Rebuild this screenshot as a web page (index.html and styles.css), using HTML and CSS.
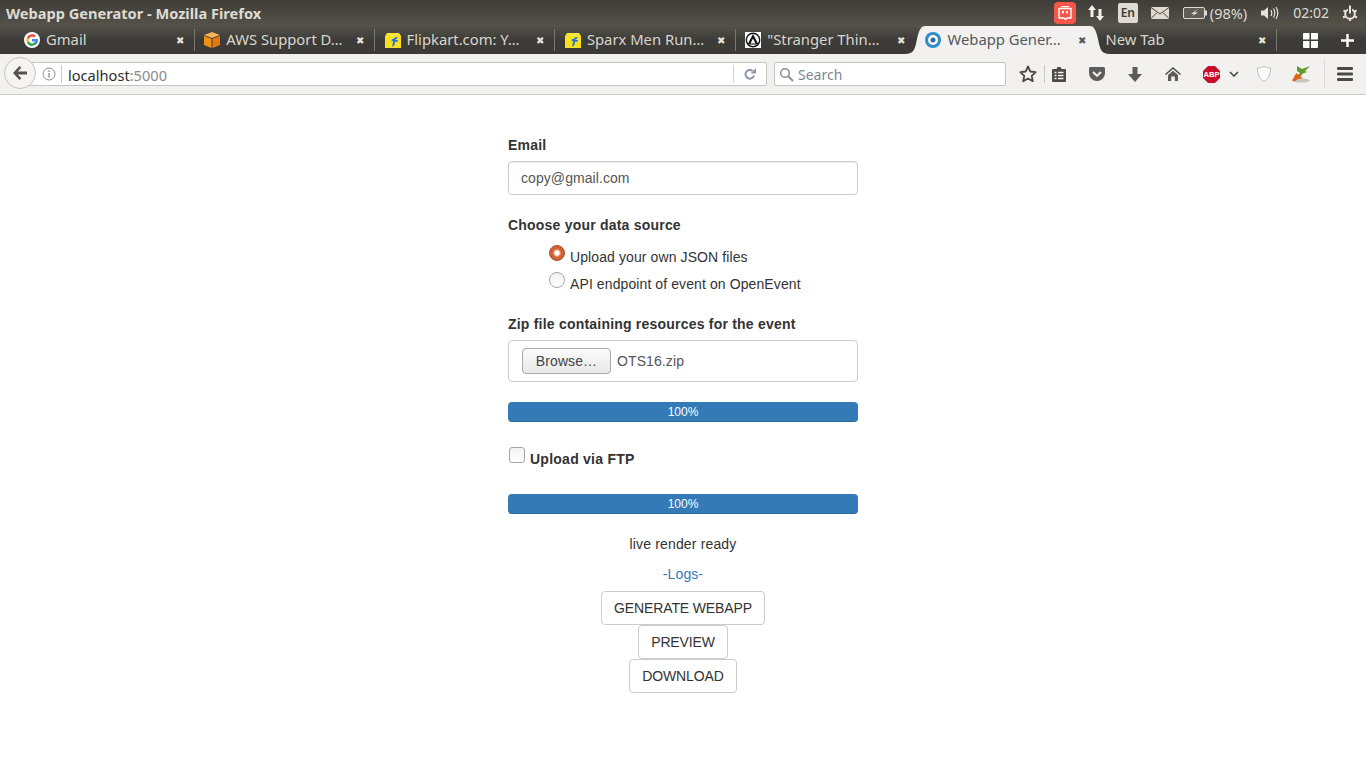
FILE: index.html
```html
<!DOCTYPE html>
<html lang="en">
<head>
<meta charset="utf-8">
<title>Webapp Generator</title>
<link rel="stylesheet" href="styles.css">
</head>
<body>
<header class="chrome">
  <div class="titlebar">
    <div class="wintitle">Webapp Generator - Mozilla Firefox</div>
    <div class="tray">
      <span class="tray-app"><svg width="22" height="22" viewBox="0 0 22 22"><rect width="22" height="22" rx="4" fill="#f4574a"/><path d="M5 6.500h12v9.500H13l-1.500 1.600L10 16H5z" fill="none" stroke="#fff" stroke-width="1.400" stroke-linejoin="round"/><rect x="8" y="9" width="1.800" height="2.400" fill="#fff"/><rect x="12.200" y="9" width="1.800" height="2.400" fill="#fff"/><rect x="7" y="4" width="8" height="1.200" fill="#fff"/></svg></span>
      <svg class="tray-net" width="18" height="18" viewBox="0 0 18 18"><path d="M5 1l4 5H6.500v7h-3V6H1zM13 17l4-5h-2.500V5h-3v7H9z" fill="#f2efe8"/></svg>
      <span class="tray-lang">En</span>
      <svg class="tray-mail" width="18" height="12" viewBox="0 0 18 12"><rect width="18" height="12" rx="1" fill="#dfdbd2"/><path d="M0 .5l9 6.500 9-6.500M0 11.500l6-6M18 11.500l-6-6" fill="none" stroke="#45433d" stroke-width="1"/></svg>
      <svg class="tray-bat" width="24" height="12" viewBox="0 0 24 12"><rect x=".5" y=".5" width="21" height="11" rx="1.500" fill="#5f5d56" stroke="#dfdbd2"/><rect x="22" y="3.500" width="2" height="5" fill="#dfdbd2"/><path d="M15 2L8 7h3.500L8 10l7-4.500h-3.500z" fill="#e8e5dd"/></svg>
      <span class="tray-pct">(98%)</span>
      <svg class="tray-vol" width="20" height="16" viewBox="0 0 20 16"><path d="M1 5.500h3L8 2v12l-4-3.500H1z" fill="#e6e2da"/><path d="M11 5q1.500 3 0 6M13.500 3.500q2.500 4.500 0 9M16 2q3.500 6 0 12" fill="none" stroke="#e6e2da" stroke-width="1.200"/></svg>
      <span class="tray-time">02:02</span>
      <svg class="tray-power" width="16" height="16" viewBox="0 0 16 16"><circle cx="8" cy="9" r="4.800" fill="none" stroke="#e6e2da" stroke-width="2"/><path d="M8 9V1" stroke="#45433d" stroke-width="4"/><path d="M8 8.500V.5" stroke="#e6e2da" stroke-width="2"/><path d="M1.500 5.500l2 1M14.500 5.500l-2 1M1 12.500l2.200-1M15 12.500l-2.200-1M8 16v-2" stroke="#e6e2da" stroke-width="2"/></svg>
    </div>
  </div>
  <div class="tabstrip">
    <div class="tab">
      <svg class="fav" width="16" height="16" viewBox="0 0 16 16"><circle cx="8" cy="8" r="8" fill="#fff"/><path d="M13.600 6.900H8v2.300h3.200c-.4 1.400-1.600 2.200-3.200 2.200a3.400 3.400 0 0 1-3.200-2.300L2.900 10.600A5.700 5.700 0 0 0 13.600 6.900z" fill="#34a853"/><path d="M4.800 9.100a3.400 3.400 0 0 1 0-2.200L2.900 5.400a5.700 5.700 0 0 0 0 5.200z" fill="#fbbc05"/><path d="M8 4.600c.9 0 1.600.3 2.200.8l1.600-1.600A5.700 5.700 0 0 0 2.900 5.400l1.900 1.500A3.400 3.400 0 0 1 8 4.600z" fill="#ea4335"/><path d="M13.600 6.900H8v2.300h3.200c-.2.700-.6 1.200-1.200 1.600l1.800 1.400c1.200-1.100 2-3 1.800-5.300z" fill="#4285f4"/></svg>
      <span class="tab-label">Gmail</span><span class="x">✖</span>
    </div>
    <div class="tab">
      <svg class="fav" width="16" height="16" viewBox="0 0 16 16"><path d="M8 0l8 3-8 3-8-3z" fill="#f7b259"/><path d="M0 4l7.500 2.800V16L0 13z" fill="#f29111"/><path d="M16 4L8.500 6.800V16l7.500-3z" fill="#e47911"/></svg>
      <span class="tab-label">AWS Support D…</span><span class="x">✖</span>
    </div>
    <div class="tab">
      <svg class="fav" width="16" height="16" viewBox="0 0 16 16"><path d="M2 1h12l2 3v12H0V4z" fill="#f9e21d"/><path d="M4 1q4 5 8 0" fill="none" stroke="#fff6a8" stroke-width=".8"/><path d="M7 15l1.200-6H6.500L7 7h1.800c.3-1.600 1.500-2 3.700-1.700l-.4 1.700H10.800l-.2 1H13l-.5 1.700h-2.400L9.400 13z" fill="#2a6fdb"/></svg>
      <span class="tab-label">Flipkart.com: Y…</span><span class="x">✖</span>
    </div>
    <div class="tab">
      <svg class="fav" width="16" height="16" viewBox="0 0 16 16"><path d="M2 1h12l2 3v12H0V4z" fill="#f9e21d"/><path d="M4 1q4 5 8 0" fill="none" stroke="#fff6a8" stroke-width=".8"/><path d="M7 15l1.200-6H6.500L7 7h1.800c.3-1.600 1.500-2 3.700-1.700l-.4 1.700H10.800l-.2 1H13l-.5 1.700h-2.400L9.400 13z" fill="#2a6fdb"/></svg>
      <span class="tab-label">Sparx Men Run…</span><span class="x">✖</span>
    </div>
    <div class="tab">
      <svg class="fav" width="16" height="16" viewBox="0 0 16 16"><rect width="16" height="16" fill="#fff"/><circle cx="8" cy="8" r="7.400" fill="#111"/><circle cx="8" cy="8" r="6" fill="#fff"/><path d="M8 2L2.500 12.500h11z" fill="#111"/><path d="M8 6.500L5.500 11.500h5z" fill="#fff"/></svg>
      <span class="tab-label">"Stranger Thin…</span><span class="x">✖</span>
    </div>
    <div class="tab tab-active">
      <svg class="tab-curve curve-left" width="20" height="28" viewBox="0 0 20 28"><path d="M0 28c9 0 10-5 12-15C14 4 16 0 20 0v28z" fill="#f2f1ef"/></svg>
      <svg class="fav" width="16" height="16" viewBox="0 0 16 16"><circle cx="8" cy="8" r="8" fill="#2f8ccb"/><circle cx="8" cy="8" r="5" fill="#fff"/><circle cx="8" cy="8" r="2.500" fill="#2a6ea8"/></svg>
      <span class="tab-label">Webapp Gener…</span><span class="x">✖</span>
      <svg class="tab-curve curve-right" width="20" height="28" viewBox="0 0 20 28"><path d="M20 28c-9 0-10-5-12-15C6 4 4 0 0 0v28z" fill="#f2f1ef"/></svg>
    </div>
    <div class="tab tab-new">
      <span class="tab-label">New Tab</span><span class="x">✖</span>
    </div>
    <svg class="tiles" width="15" height="15" viewBox="0 0 15 15"><path d="M0 1a1 1 0 0 1 1-1h5.500v6.500H0zM8 0h6a1 1 0 0 1 1 1v5.500H8zM0 8h6.500v7H1a1 1 0 0 1-1-1zM8 8h7v6a1 1 0 0 1-1 1H8z" fill="#fff"/></svg>
    <svg class="plus" width="13" height="13" viewBox="0 0 13 13"><path d="M5.300 0h2.400v5.300H13v2.400H7.700V13H5.300V7.700H0V5.300h5.300z" fill="#fff"/></svg>
  </div>
  <div class="navbar">
    <div class="urlbar">
      <span class="back"><svg width="16" height="14" viewBox="0 0 16 14"><path d="M7.500 0L1 7l6.500 7 1.800-1.800L5.800 8.500H15v-3H5.800l3.500-3.700z" fill="#55534f"/></svg></span>
      <svg class="info" width="14" height="14" viewBox="0 0 14 14"><circle cx="7" cy="7" r="6" fill="none" stroke="#8e8e8e"/><rect x="6.300" y="6" width="1.400" height="4.500" fill="#8e8e8e"/><rect x="6.300" y="3.500" width="1.400" height="1.500" fill="#8e8e8e"/></svg>
      <span class="url">localhost<span class="url-port">:5000</span></span>
      <span class="reload"><svg width="12" height="12" viewBox="0 0 12 12"><path d="M10 7.500A4.300 4.300 0 1 1 8.600 3" fill="none" stroke="#8a97a5" stroke-width="2"/><path d="M12 0v5.500H6.500z" fill="#8a97a5"/></svg></span>
    </div>
    <div class="searchbar">
      <svg width="15" height="15" viewBox="0 0 15 15"><circle cx="6" cy="6" r="4.300" fill="none" stroke="#8e8e8e" stroke-width="1.600"/><path d="M9.200 9.200L14 14" stroke="#8e8e8e" stroke-width="2"/></svg>
      <span class="search-ph">Search</span>
    </div>
    <div class="tools">
      <svg class="t-star" width="18" height="18" viewBox="0 0 18 18"><path d="M9 1.500l2.300 5 5.400.6-4 3.700 1.100 5.400L9 13.500l-4.800 2.700 1.100-5.400-4-3.700 5.400-.6z" fill="none" stroke="#4a4a4a" stroke-width="1.800" stroke-linejoin="round"/></svg>
      <span class="t-sep"></span>
      <svg class="t-list" width="14" height="16" viewBox="0 0 14 16"><path d="M1 3h3.500l1-2h3l1 2H13a1 1 0 0 1 1 1v11a1 1 0 0 1-1 1H1a1 1 0 0 1-1-1V4a1 1 0 0 1 1-1z" fill="#4a4a4a"/><path d="M2.500 6.500h2M6 6.500h5.500M2.500 9.500h2M6 9.500h5.500M2.500 12.500h2M6 12.500h5.500" stroke="#f2f1ef" stroke-width="1.300"/></svg>
      <svg class="t-pocket" width="16" height="14" viewBox="0 0 16 14"><path d="M1.500 0h13A1.500 1.500 0 0 1 16 1.500V6A8 8 0 0 1 0 6V1.500A1.500 1.500 0 0 1 1.500 0z" fill="#5c5c5c"/><path d="M4 5l4 3.800L12 5" fill="none" stroke="#f2f1ef" stroke-width="2"/></svg>
      <svg class="t-down" width="14" height="15" viewBox="0 0 14 15"><path d="M4.500 0h5v7H14l-7 8-7-8h4.500z" fill="#5c5c5c"/></svg>
      <svg class="t-home" width="16" height="14" viewBox="0 0 16 14"><path d="M8 0l8 7-1 1-7-6-7 6-1-1z" fill="#4f4f4f"/><path d="M3 8l5-4.300L13 8v6H9.800V9.500H6.200V14H3z" fill="#5c5c5c"/></svg>
      <svg class="t-abp" width="17" height="17" viewBox="0 0 17 17"><path d="M5 0h7l5 5v7l-5 5H5l-5-5V5z" fill="#c70d2c"/><text x="8.500" y="11.300" class="abp-text" text-anchor="middle">ABP</text></svg>
      <svg class="t-chev" width="10" height="6" viewBox="0 0 10 6"><path d="M1 1l4 4 4-4" fill="none" stroke="#4a4a4a" stroke-width="1.600"/></svg>
      <svg class="t-shield" width="14" height="16" viewBox="0 0 14 16"><path d="M7 .5c2 1 4 1.300 6.500 1.300 0 6-1 10.500-6.500 13.700C1.500 12.300.5 7.800.5 1.800 3 1.800 5 1.500 7 .5z" fill="#fbfbfb" stroke="#bdbdbd"/></svg>
      <svg class="t-ext" width="20" height="18" viewBox="0 0 20 18"><ellipse cx="10" cy="15.500" rx="9" ry="2" fill="#c9c7bf"/><path d="M6 1l5 3 8-3-5 5 2 1-5 2-2 5-3-3 3-3-3-2z" fill="#5f9c2b"/><path d="M1 15c2-1 2-5 5-7l1 2 4-1-3 3 5 1-6 1-3 2-2 0z" fill="#e2611b"/></svg>
      <span class="t-div"></span>
      <svg class="t-menu" width="16" height="14" viewBox="0 0 16 14"><rect width="16" height="3" rx="1" fill="#4a4a4a"/><rect y="5.500" width="16" height="3" rx="1" fill="#4a4a4a"/><rect y="11" width="16" height="3" rx="1" fill="#4a4a4a"/></svg>
    </div>
  </div>
</header>
<main class="page">
  <form class="form">
    <label class="field-label" for="email">Email</label>
    <input class="text-input" id="email" type="text" value="copy@gmail.com">

    <div class="field-label source-label">Choose your data source</div>
    <div class="radios">
      <label class="radio-row"><input class="radio" type="radio" name="src" checked><span>Upload your own JSON files</span></label>
      <label class="radio-row radio-row-2"><input class="radio" type="radio" name="src"><span>API endpoint of event on OpenEvent</span></label>
    </div>

    <div class="field-label zip-label">Zip file containing resources for the event</div>
    <div class="filebox"><button class="browse" type="button">Browse…</button><span class="filename">OTS16.zip</span></div>

    <div class="progress progress-1">100%</div>

    <label class="ftp-row"><input class="check" type="checkbox"><span>Upload via FTP</span></label>

    <div class="progress progress-2">100%</div>

    <div class="status">live render ready</div>
    <a class="logs" href="#">-Logs-</a>
    <button class="btn" type="button">GENERATE WEBAPP</button>
    <button class="btn" type="button">PREVIEW</button>
    <button class="btn" type="button">DOWNLOAD</button>
  </form>
</main>
</body>
</html>
```
FILE: styles.css
```css
* { box-sizing: border-box; }
html, body { margin: 0; padding: 0; background: #fff; }
body { font-family: "Liberation Sans", Arial, sans-serif; font-size: 14px; line-height: 20px; color: #333; height: 768px; overflow: hidden; letter-spacing: .1px; }

.chrome { font-family: "Noto Sans", sans-serif; letter-spacing: 0; }
.titlebar { height: 26px; background: linear-gradient(#3f3d38, #55524a); display: flex; align-items: center; justify-content: space-between; padding-left: 6px; }
.wintitle { font-weight: 700; font-size: 14.600px; color: #dfdbd2; }
.tray { display: flex; align-items: center; color: #dfdbd2; font-size: 14.500px; height: 26px; }
.tray-app { display: flex; margin-right: 10.500px; }
.tray-net { margin-right: 13px; }
.tray-lang { width: 20px; height: 20px; background: #dfdbd2; color: #3c3b37; font-size: 12px; font-weight: 600; border-radius: 2px; display: flex; align-items: center; justify-content: center; margin-right: 13px; }
.tray-mail { margin-right: 14px; }
.tray-bat { margin-right: 3px; }
.tray-pct { margin-right: 13px; }
.tray-vol { margin-right: 13px; }
.tray-time { margin-right: 13px; font-size: 14px; }
.tray-power { margin-right: 8px; }

.tabstrip { height: 28px; background: linear-gradient(#55524a, #3c3b37 50%); display: flex; align-items: center; padding-left: 14.600px; position: relative; color: #dfdbd2; }
.tab { width: 180.300px; height: 28px; display: flex; align-items: center; padding-left: 9.400px; padding-right: 9px; font-size: 14.800px; position: relative; }
.tab::after { content: ""; position: absolute; right: 0; top: 3px; height: 22px; width: 1px; background: #7a7872; }
.fav { flex: none; margin-right: 6px; }
.tab-label { flex: 1; white-space: nowrap; overflow: hidden; color: #d9d6cd; margin-bottom: 2px; }
.x { font-size: 10px; color: #e6e3db; width: 12px; text-align: center; }
.tab-active { background: #f2f1ef; width: 165px; height: 28px; padding-left: 0; padding-right: 2px; margin: 0 9px 0 9.400px; z-index: 1; }
.tab-active::after { display: none; }
.tab-active .tab-label { color: #55595e; }
.tab-active .x { color: #55595e; }
.tab:nth-child(5)::after { display: none; }
.tab-curve { position: absolute; top: 0; }
.curve-left { left: -20px; }
.curve-right { right: -20px; }
.tab-new { width: 172px; padding-left: 0; padding-right: 9px; margin-left: 6px; }
.tiles { margin-left: 26px; }
.plus { margin-left: 23px; }

.navbar { height: 41px; background: #f2f1ef; border-bottom: 1px solid #cfcdc9; display: flex; align-items: center; padding-left: 4px; }
.urlbar { width: 752px; height: 24px; margin-left: 11px; background: #fff; border: 1px solid #c5c4c2; border-radius: 2px; display: flex; align-items: center; position: relative; padding-left: 20px; }
.back { position: absolute; left: -12px; top: -6px; width: 32px; height: 32px; border-radius: 50%; background: #f5f4f2; border: 1px solid #c5c4c2; display: flex; align-items: center; justify-content: center; }
.info { margin-left: 6px; margin-right: 5px; }
.url { flex: 1; font-size: 14.600px; color: #2d2d2d; border-left: 1px solid #c9c9c9; padding-left: 6px; line-height: 18px; height: 18px; padding-top: 1px; }
.url-port { color: #8a8a8a; }
.reload { width: 33px; height: 18px; border-left: 1px solid #d4d4d4; display: flex; align-items: center; justify-content: center; }
.searchbar { width: 232px; height: 24px; margin-left: 7px; background: #fff; border: 1px solid #c5c4c2; border-radius: 2px; display: flex; align-items: center; padding-left: 4px; gap: 4px; }
.search-ph { color: #7b8794; font-size: 14px; padding-top: 1px; }
.tools { display: flex; align-items: center; height: 40px; flex: 1; position: relative; }
.t-star { margin-left: 13px; flex: none; }
.t-sep { width: 1px; height: 18px; background: #c9c8c5; margin-left: 7px; }
.t-list { margin-left: 7px; flex: none; }
.t-pocket { margin-left: 23px; flex: none; }
.t-down { margin-left: 23px; flex: none; }
.t-home { margin-left: 23px; flex: none; }
.t-abp { margin-left: 22px; flex: none; }
.abp-text { font-family: "Liberation Sans", sans-serif; font-size: 7.600px; font-weight: 700; fill: #fff; }
.t-chev { margin-left: 9px; flex: none; }
.t-shield { margin-left: 18px; flex: none; }
.t-ext { margin-left: 20px; flex: none; }
.t-div { width: 1px; height: 30px; background: #dddcd9; margin-left: 13px; }
.t-menu { margin-left: 12px; flex: none; }

.page { display: flex; justify-content: center; }
.form { width: 350px; display: flex; flex-direction: column; padding-top: 40px; }
.field-label { font-weight: 700; height: 20px; margin-bottom: 6px; display: block; letter-spacing: .21px; }
.text-input { height: 34px; width: 100%; border: 1px solid #ccc; border-radius: 4px; padding: 6px 12px; font: 14px/20px "Liberation Sans", sans-serif; letter-spacing: .07px; color: #555; box-shadow: inset 0 1px 1px rgba(0,0,0,.075); }
.source-label { margin-top: 20px; margin-bottom: 0; }
.radios { padding-left: 41px; }
.radio-row { display: flex; height: 32px; padding-top: 12px; line-height: 20px; align-items: flex-start; }
.radio-row-2 { height: 27px; padding-top: 7px; }
.radio-row span { margin-left: 5px; }
.radio { appearance: none; -webkit-appearance: none; margin: -2px 0 0; width: 16px; height: 16px; border-radius: 50%; border: 1px solid #a5a5a5; background: linear-gradient(#f2f2f2, #fff); flex: none; }
.radio:checked { border: 1px solid #a94d28; background: radial-gradient(circle, #fff 0 2px, #eeb393 3px, #d9683a 4px, #bf4f26 100%); }
.zip-label { margin-top: 20px; margin-bottom: 6px; }
.filebox { height: 42px; border: 1px solid #ccc; border-radius: 4px; padding: 7px 13px; display: flex; align-items: center; }
.browse { width: 89px; height: 26px; font: 14px "Liberation Sans", sans-serif; letter-spacing: .1px; color: #444; background: linear-gradient(#fbfbfb, #e8e8e6); border: 1px solid #a9a9a9; border-radius: 4px; padding: 0; }
.filename { margin-left: 6px; color: #555; }
.progress { height: 20px; background: #337ab7; border-radius: 4px; color: #fff; font-size: 12px; line-height: 20px; letter-spacing: 0; text-align: center; box-shadow: inset 0 -1px 0 rgba(0,0,0,.15); }
.progress-1 { margin-top: 20px; }
.ftp-row { display: flex; margin-top: 25px; font-weight: 700; height: 20px; align-items: flex-start; letter-spacing: .25px; }
.ftp-row span { margin-left: 5px; margin-top: 2px; }
.check { appearance: none; -webkit-appearance: none; margin: 0 0 0 1px; width: 16px; height: 16px; border: 1px solid #a5a5a5; border-radius: 3px; background: linear-gradient(#f2f2f2, #fff); flex: none; }
.progress-2 { margin-top: 27px; }
.status { margin-top: 20px; text-align: center; letter-spacing: .15px; }
.logs { margin-top: 10px; text-align: center; color: #337ab7; text-decoration: none; height: 20px; }
.btn { align-self: center; height: 34px; padding: 6px 12px; font: 14px/20px "Liberation Sans", sans-serif; letter-spacing: -.13px; color: #333; background: #fff; border: 1px solid #ccc; border-radius: 4px; }
.logs + .btn { margin-top: 7px; }
```
